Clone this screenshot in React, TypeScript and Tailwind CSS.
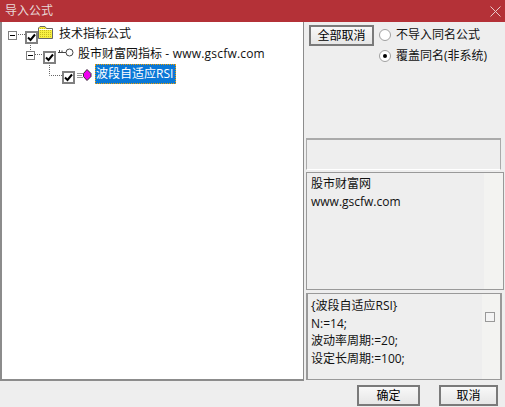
import React from "react";

function Check() {
  return (
    <span className="shrink-0 w-[13px] h-[13px] border-2 border-[#808080] bg-white flex items-center justify-center">
      <svg width="9" height="9" viewBox="0 0 9 9">
        <path d="M1 4.5 L3.5 7 L8 1.5" fill="none" stroke="#000" strokeWidth="2" />
      </svg>
    </span>
  );
}

function Expander() {
  return (
    <span className="shrink-0 w-[9px] h-[9px] border border-[#808080] bg-white flex items-center justify-center">
      <span className="w-[5px] h-px bg-black" />
    </span>
  );
}

function Folder() {
  return (
    <svg width="16" height="13" viewBox="0 0 16 13" className="shrink-0">
      <defs>
        <pattern id="dither" width="2" height="2" patternUnits="userSpaceOnUse">
          <rect width="2" height="2" fill="#f8f040" />
          <rect width="1" height="1" fill="#c8bc20" />
        </pattern>
      </defs>
      <path d="M.5 12.5 V2 L2 .5 H7 L8.5 2.5 H14.5 V12.5 Z" fill="url(#dither)" stroke="#666" />
      <path d="M1 3.5 H14" stroke="#fff" />
    </svg>
  );
}

function Key() {
  return (
    <svg width="16" height="9" viewBox="0 0 16 9" className="shrink-0">
      <circle cx="11.5" cy="4.5" r="3.5" fill="#fff" stroke="#444" />
      <path d="M0 4.5 H8 M1.5 2 V4.5 M4 2.5 V4.5" stroke="#444" fill="none" />
    </svg>
  );
}

function Gem() {
  return (
    <svg width="15" height="12" viewBox="0 0 15 12" className="shrink-0">
      <path d="M0 4.5 H6 M0 6.5 H5 M0 8.5 H6" stroke="#999" />
      <path d="M10 .5 L14 4.5 V7.5 L10 11.5 L6.5 7.5 V4.5 Z" fill="#f000f0" stroke="#333" />
    </svg>
  );
}

function Radio({ on }: { on?: boolean }) {
  return (
    <span className="shrink-0 w-[12px] h-[12px] rounded-full bg-white border border-[#a0a0a0] flex items-center justify-center">
      {on && <span className="w-[4px] h-[4px] rounded-full bg-black" />}
    </span>
  );
}

function Btn({ label, cls }: { label: string; cls: string }) {
  return (
    <button className={"flex items-center justify-center border-2 border-[#7a7a7a] bg-gradient-to-b from-[#f8f8f8] to-[#e6e6e6] text-[12px] text-black " + cls}>
      {label}
    </button>
  );
}

export default function App() {
  return (
    <div
      className="w-[505px] h-[407px] flex flex-col bg-[#eeeeee] overflow-hidden text-[12px] leading-[18px] text-[#111]"
      style={{ fontFamily: '"Open Sans", "Noto Sans CJK SC", sans-serif' }}
    >
      <div className="h-[22px] shrink-0 bg-[#b43137] flex items-center justify-between pl-[5px] pr-[3px] text-[#e8d8d8]">
        <span>导入公式</span>
        <svg width="11" height="11" viewBox="0 0 11 11" className="mr-[1px]">
          <path d="M.5 .5 L10.5 10.5 M10.5 .5 L.5 10.5" stroke="#e8c8c8" fill="none" />
        </svg>
      </div>

      <div className="h-[359px] shrink-0 flex">
        <div className="relative w-[304px] shrink-0 bg-white border-l-2 border-r border-b-2 border-[#8c8c8c] pt-[2px]">
          <svg className="absolute left-0 top-0" width="100" height="70">
            <path
              d="M14 12.5 H23 M28.5 21 V28 M33 32.5 H41 M47.5 41 V53.5 H60"
              stroke="#666"
              strokeDasharray="1 1"
              fill="none"
            />
          </svg>
          <div className="relative h-5 flex items-center pl-[6px]">
            <span className="mt-[2px]"><Expander /></span>
            <span className="ml-[8px] mt-[6px]"><Check /></span>
            <span className="-mt-[3px]"><Folder /></span>
            <span className="ml-[5px] whitespace-nowrap">技术指标公式</span>
          </div>
          <div className="relative h-5 flex items-center pl-[24px]">
            <span className="mt-[2px]"><Expander /></span>
            <span className="ml-[8px] mt-[6px]"><Check /></span>
            <span className="ml-[2px] -mt-[4px]"><Key /></span>
            <span className="ml-[4px] whitespace-nowrap">
              股市财富网指标<span className="tracking-[0.2px]"> - www.gscfw.com</span>
            </span>
          </div>
          <div className="relative h-5 flex items-center pl-[60px]">
            <span className="mt-[6px]"><Check /></span>
            <span className="ml-[2px] mt-[1px]"><Gem /></span>
            <span className="ml-[3px] h-5 flex items-center pl-[1px] pr-[3px] bg-[#0a78d7] text-white whitespace-nowrap outline-1 outline-dotted outline-[#f0a000] -outline-offset-1">
              波段自适应RSI
            </span>
          </div>
        </div>

        <div className="flex-1 flex flex-col pl-[2px] pr-[1px]">
          <div className="h-[116px] shrink-0 flex pt-[3px] pl-[3px]">
            <Btn label="全部取消" cls="w-[65px] h-[21px]" />
            <div className="ml-[5px] flex flex-col gap-[3px] pt-[1px]">
              <div className="flex items-center gap-[5px] h-[18px]"><Radio /><span>不导入同名公式</span></div>
              <div className="flex items-center gap-[5px] h-[18px]"><Radio on /><span>覆盖同名(非系统)</span></div>
            </div>
          </div>
          <div className="h-[32px] w-[195px] shrink-0 border-t-2 border-l border-r border-[#aaaaaa] border-b border-b-white" />
          <div className="mt-[2px] h-[118px] w-[198px] shrink-0 border border-[#999999] flex bg-[#f3f3f1]">
            <div className="w-[177px] bg-[#eeeeee] pl-[4px] pt-[2px]">
              <div>股市财富网</div>
              <div>www.gscfw.com</div>
            </div>
          </div>
          <div className="mt-[3px] h-[87px] w-[196px] shrink-0 border-2 border-[#999999] border-t border-b flex bg-[#f3f3f1]">
            <div className="w-[174px] bg-[#eeeeee] pl-[3px] pt-[3px] leading-[17.5px]">
              <div>{"{波段自适应RSI}"}</div>
              <div>N:=14;</div>
              <div>波动率周期:=20;</div>
              <div>设定长周期:=100;</div>
            </div>
            <div className="pt-[18px] pl-[3px]">
              <span className="block w-[10px] h-[10px] border border-[#999999] bg-[#f4f4f4]" />
            </div>
          </div>
        </div>
      </div>

      <div className="flex-1 flex justify-end gap-[19px] pt-[4px] pr-[7px]">
        <Btn label="确定" cls="w-[63px] h-[21px]" />
        <Btn label="取消" cls="w-[59px] h-[21px]" />
      </div>
    </div>
  );
}
